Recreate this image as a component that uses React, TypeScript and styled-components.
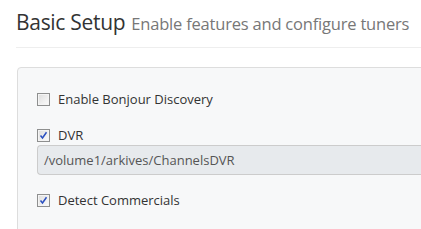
import styled, { createGlobalStyle } from "styled-components";

const GlobalStyle = createGlobalStyle`
  html, body {
    margin: 0;
    padding: 0;
    background: #ffffff;
    overflow: hidden;
  }
  body {
    font-family: "Open Sans", "Liberation Sans", sans-serif;
    color: #333333;
  }
`;

const Page = styled.div`
  width: 460px;
  padding: 8px 0 0 16px;
  box-sizing: border-box;
`;

const Header = styled.div`
  display: flex;
  align-items: baseline;
  gap: 6px;
  padding-bottom: 11px;
  border-bottom: 1px solid #eeeeee;
  white-space: nowrap;
`;

const Title = styled.h1`
  margin: 0;
  font-size: 21px;
  font-weight: 400;
  color: #333333;
  letter-spacing: -0.3px;
`;

const Subtitle = styled.small`
  font-size: 16.5px;
  color: #777777;
  letter-spacing: -0.2px;
`;

const Panel = styled.div`
  margin: 19px 0 0 1px;
  height: 200px;
  background: #f7f8f9;
  border: 1px solid #dddddd;
  border-radius: 4px;
  padding: 24px 0 0 19px;
  box-sizing: border-box;
  display: flex;
  flex-direction: column;
`;

const Field = styled.div<{ $gap?: number }>`
  display: flex;
  flex-direction: column;
  gap: 3px;
  margin-bottom: ${(p) => p.$gap ?? 0}px;
`;

const CheckRow = styled.label`
  display: flex;
  align-items: center;
  gap: 8px;
  font-size: 13px;
  color: #333333;
  height: 14px;
`;

const Box = styled.span`
  width: 11px;
  height: 11px;
  border: 1px solid #8e8f8f;
  background: linear-gradient(135deg, #dcdcdc 0%, #f0f0f0 60%, #fbfbfb 100%);
  box-shadow: inset 0 0 0 1px #f4f4f4;
  display: flex;
  align-items: center;
  justify-content: center;
  flex: none;
`;

const PathInput = styled.div`
  height: 28px;
  margin-right: -20px;
  background: #e7eaed;
  border: 1px solid #cccccc;
  border-right: none;
  border-radius: 4px 0 0 4px;
  padding-left: 6px;
  display: flex;
  align-items: center;
  font-size: 13px;
  color: #555555;
`;

function Checkbox({ checked, label }: { checked: boolean; label: string }) {
  return (
    <CheckRow>
      <Box>
        {checked && (
          <svg width="9" height="9" viewBox="0 0 9 9">
            <path d="M1.5 4.5 L3.5 7 L7.5 1.2" fill="none" stroke="#2a4fc0" strokeWidth="1.5" />
          </svg>
        )}
      </Box>
      {label}
    </CheckRow>
  );
}

export default function App() {
  return (
    <>
      <GlobalStyle />
      <Page>
        <Header>
          <Title>Basic Setup</Title>
          <Subtitle>Enable features and configure tuners</Subtitle>
        </Header>
        <Panel>
          <Field $gap={22}>
            <Checkbox checked={false} label="Enable Bonjour Discovery" />
          </Field>
          <Field $gap={18}>
            <Checkbox checked label="DVR" />
            <PathInput>/volume1/arkives/ChannelsDVR</PathInput>
          </Field>
          <Field>
            <Checkbox checked label="Detect Commercials" />
          </Field>
        </Panel>
      </Page>
    </>
  );
}
